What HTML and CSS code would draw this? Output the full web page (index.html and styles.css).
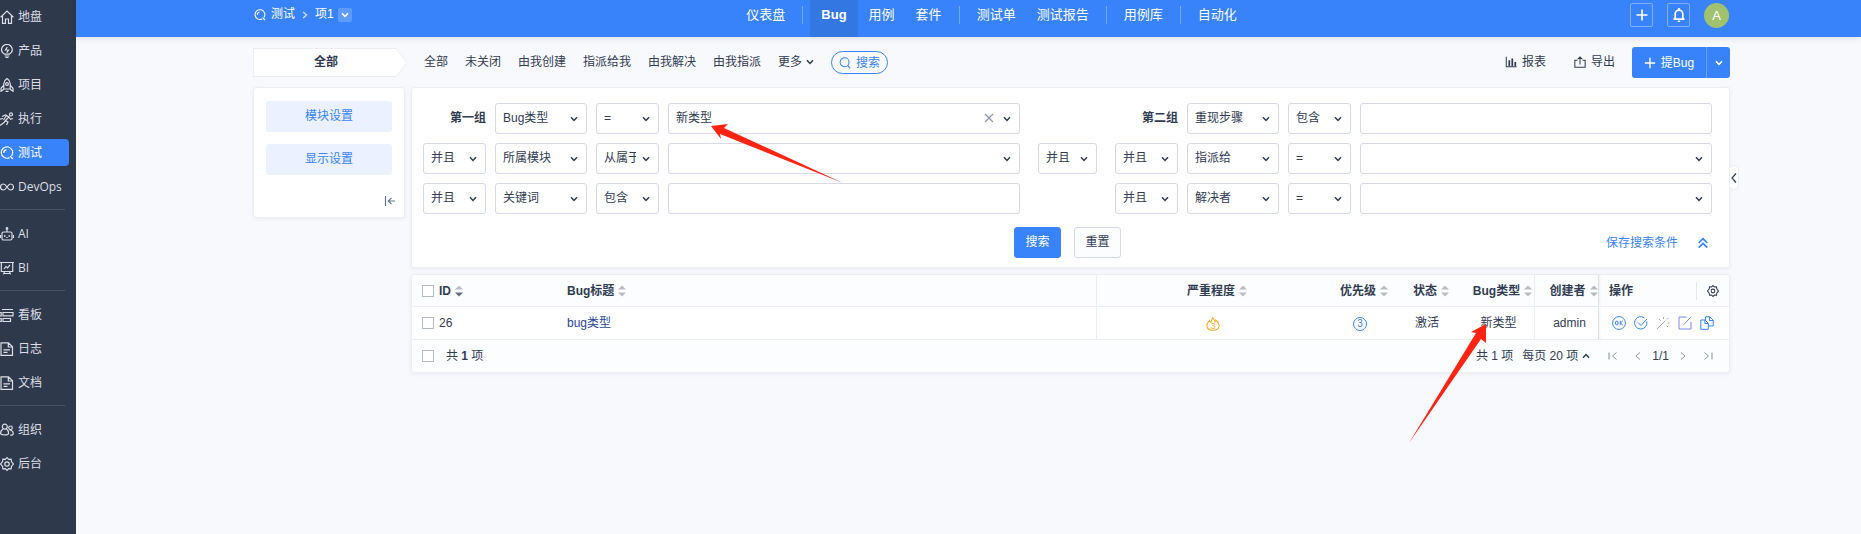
FILE: index.html
```html
<!DOCTYPE html>
<html lang="zh-CN">
<head>
<meta charset="utf-8">
<title>测试 - Bug</title>
<link rel="stylesheet" href="styles.css">
</head>
<body>
<svg class="defs" aria-hidden="true">
  <symbol id="caret" viewBox="0 0 8 8"><path d="M1 2.2l3 3.3 3-3.3"/></symbol>
  <symbol id="search" viewBox="0 0 14 14"><circle cx="6.5" cy="6.2" r="5.2"/><path d="M10.3 10l2.7 3"/></symbol>
  <symbol id="qa" viewBox="0 0 14 14"><path d="M9.5 11.6A5.7 5.7 0 1 1 11.6 9.8M10 10l3 3M3.8 7a3 3 0 0 1 2.6-3.2"/></symbol>
  <symbol id="doc" viewBox="0 0 14 14"><path d="M1 .8h7.5l4 4v8.6H1zM8.3.8v4.2h4.2M3.5 7.8h6.500M3.500 10.300h4"/></symbol>
  <symbol id="gear" viewBox="0 0 14 14"><path d="M7 .6l1.700 1.700 2.400-.2.3 2.400L13.400 7l-2 2.500-.3 2.400-2.400-.2L7 13.400l-1.700-1.700-2.400.2-.3-2.400L.6 7l2-2.500.3-2.400 2.400.2z"/><circle cx="7" cy="7" r="2.200"/></symbol>
  <symbol id="sort" viewBox="0 0 8 12"><path d="M4 0.500L8 4.500H0z"/><path class="down" d="M4 11.500L0 7.500h8z"/></symbol>
</svg>
<div class="app">
  <nav class="sidebar">
    <ul class="menu">
      <li><a href="#"><svg class="ic" viewBox="0 0 14 14"><path d="M.6 7.300L7 1l6.400 6.300M2.500 6v7.300h3V9h3v4.300h3V6"/></svg>地盘</a></li>
      <li><a href="#"><svg class="ic" viewBox="0 0 14 14"><path d="M4.500 10.200C2.500 9 1.500 7.500 1.500 5.800a5.400 5.400 0 0 1 10.800 0c0 1.700-1 3.200-3 4.400zM4.700 12h4.600M5.500 13.700h3M7.300 3L5.500 6h3L6.800 8.600"/></svg>产品</a></li>
      <li><a href="#"><svg class="ic" viewBox="0 0 14 14"><path d="M3.800 11V5.500C4 3.500 5.500 1.500 7 .6c1.500.9 3 2.900 3.200 4.900V11zM3.800 7.200L1 10.300v3l2.800-2M10.200 7.200l2.800 3.100v3l-2.800-2M5.500 13.300h3"/><circle cx="7" cy="6" r="1.400"/></svg>项目</a></li>
      <li><a href="#"><svg class="ic" viewBox="0 0 14 14"><circle cx="11" cy="2.400" r="1.500"/><path d="M2 4.500l3.500-1.500L9 5 5.500 8.500 8 10l-1.500 3M5.800 8.300L4 10.500 0 13.500M9 5l1.500 2.300 2.500-.8M0 7.200l3-.7M6.500 3.500L3.500 8"/></svg>执行</a></li>
      <li><a href="#" class="active"><svg class="ic"><use href="#qa"/></svg>测试</a></li>
      <li><a href="#"><svg class="ic" viewBox="0 0 14 14"><path d="M7 7C5.500 4.800 4.800 4 3.500 4a3 3 0 0 0 0 6C4.800 10 5.500 9.200 7 7s2.200-3 3.500-3a3 3 0 0 1 0 6C9.200 10 8.500 9.200 7 7z"/></svg>DevOps</a></li>
      <li class="rule"></li>
      <li><a href="#"><svg class="ic" viewBox="0 0 14 14"><rect x="2" y="5" width="10" height="8" rx="1.500"/><path d="M7 5V2.500M.6 8v3M13.400 8v3M4.800 8v2M9.200 8v2M6.300 10.500h1.400"/><circle cx="7" cy="1.500" r=".8"/></svg>AI</a></li>
      <li><a href="#"><svg class="ic" viewBox="0 0 14 14"><path d="M0 1.500h14M1.300 1.500v9h11.400v-9M4 8l2-2.500 1.500 1.300L10 4M4.500 10.500L3.500 13.400M9.500 10.500l1 2.900M4 12.500h6"/></svg>BI</a></li>
      <li class="rule"></li>
      <li><a href="#"><svg class="ic" viewBox="0 0 14 14"><path d="M2 1.500h11M3 4.500h10v3.300H3zM3 10.500h7.500v3H3zM0 4.500h1.200v3.300H0M0 10.500h1.200v3H0"/></svg>看板</a></li>
      <li><a href="#"><svg class="ic"><use href="#doc"/></svg>日志</a></li>
      <li><a href="#"><svg class="ic"><use href="#doc"/></svg>文档</a></li>
      <li class="rule"></li>
      <li><a href="#"><svg class="ic" viewBox="0 0 14 14"><circle cx="4.800" cy="3.600" r="2.500"/><circle cx="10.500" cy="4.800" r="1.800"/><path d="M3 6C1.200 7.200.6 8.800.6 10.500c0 1.700 8 2 8 0C8.600 8.800 8.200 7.200 6.500 6M9.500 7c2.400.2 3.700 2 3.700 3.800 0 1-1 1.500-3 1.400"/></svg>组织</a></li>
      <li><a href="#"><svg class="ic"><use href="#gear"/></svg>后台</a></li>
    </ul>
  </nav>
  <div class="page">
    <header class="header">
      <div class="crumbs">
        <svg class="ic small"><use href="#qa"/></svg>
        <a href="#">测试</a>
        <svg class="crumb-sep" viewBox="0 0 8 8"><path d="M2.200 1l3.300 3-3.300 3"/></svg>
        <a href="#">项1</a>
        <button class="crumb-caret" aria-label="切换"><svg class="caret"><use href="#caret"/></svg></button>
      </div>
      <nav class="tabs">
        <a href="#">仪表盘</a><i></i><a href="#" class="active">Bug</a><a href="#">用例</a><a href="#">套件</a><i></i><a href="#">测试单</a><a href="#">测试报告</a><i></i><a href="#">用例库</a><i></i><a href="#">自动化</a>
      </nav>
      <div class="user">
        <button class="square" aria-label="新建"><svg class="ic" viewBox="0 0 14 14"><path d="M7 1.500v11M1.500 7h11"/></svg></button>
        <button class="square" aria-label="通知"><svg class="ic" viewBox="0 0 14 14"><path d="M3.200 11V6a3.800 3.800 0 0 1 7.600 0v5M1.500 11.200h11M7 0v2M5.800 13.300h2.400"/></svg></button>
        <button class="avatar">A</button>
      </div>
    </header>
    <div class="content">
      <div class="toolbar">
        <div class="scope">
          <svg class="scope-tip" viewBox="0 0 12 30" preserveAspectRatio="none"><path d="M0 .5L11 15 0 29.500"/></svg>
          <span>全部</span>
        </div>
        <div class="filters">
          <a href="#">全部</a><a href="#">未关闭</a><a href="#">由我创建</a><a href="#">指派给我</a><a href="#">由我解决</a><a href="#">由我指派</a>
          <button class="more">更多<svg class="caret"><use href="#caret"/></svg></button>
          <button class="pill"><svg class="ic small"><use href="#search"/></svg>搜索</button>
        </div>
        <div class="actions">
          <button class="plain"><svg class="ic small" viewBox="0 0 14 14"><path d="M1.500 1v11.500H13.500"/><path class="bars" d="M5 5v7M8.500 3v9M12 7v5"/></svg>报表</button>
          <button class="plain"><svg class="ic small" viewBox="0 0 14 14"><path d="M4 5H1v8h12V5h-3M7 10V1.200M4.200 3.800L7 1l2.800 2.800"/></svg>导出</button>
          <div class="split"><button class="create"><svg class="ic plus" viewBox="0 0 14 14"><path d="M7 1v12M1 7h12"/></svg>提Bug</button><button class="create-more" aria-label="更多"><svg class="caret"><use href="#caret"/></svg></button></div>
        </div>
      </div>
      <div class="body">
        <aside class="modules card">
          <button>模块设置</button>
          <button>显示设置</button>
          <svg class="fold" viewBox="0 0 12 12"><path d="M1.500 1v10M11 6H4.500M7.500 2.800L4.300 6l3.200 3.200"/></svg>
        </aside>
        <main class="main">
          <form class="query card">
            <div class="groups">
              <div class="group">
                <strong>第一组</strong>
                <span class="sel"><select aria-label="字段"><option>Bug类型</option></select><svg class="caret"><use href="#caret"/></svg></span>
                <span class="sel"><select aria-label="条件"><option>=</option></select><svg class="caret"><use href="#caret"/></svg></span>
                <span class="sel"><select aria-label="值"><option>新类型</option></select><svg class="clear" viewBox="0 0 10 10"><path d="M1 1l8 8M9 1L1 9"/></svg><svg class="caret"><use href="#caret"/></svg></span>
                <span class="sel"><select aria-label="关系"><option>并且</option></select><svg class="caret"><use href="#caret"/></svg></span>
                <span class="sel"><select aria-label="字段"><option>所属模块</option></select><svg class="caret"><use href="#caret"/></svg></span>
                <span class="sel"><select aria-label="条件"><option>从属于</option></select><svg class="caret"><use href="#caret"/></svg></span>
                <span class="sel"><select aria-label="值"><option></option></select><svg class="caret"><use href="#caret"/></svg></span>
                <span class="sel"><select aria-label="关系"><option>并且</option></select><svg class="caret"><use href="#caret"/></svg></span>
                <span class="sel"><select aria-label="字段"><option>关键词</option></select><svg class="caret"><use href="#caret"/></svg></span>
                <span class="sel"><select aria-label="条件"><option>包含</option></select><svg class="caret"><use href="#caret"/></svg></span>
                <input type="text" aria-label="值">
              </div>
              <span class="sel joint"><select aria-label="组关系"><option>并且</option></select><svg class="caret"><use href="#caret"/></svg></span>
              <div class="group">
                <strong>第二组</strong>
                <span class="sel"><select aria-label="字段"><option>重现步骤</option></select><svg class="caret"><use href="#caret"/></svg></span>
                <span class="sel"><select aria-label="条件"><option>包含</option></select><svg class="caret"><use href="#caret"/></svg></span>
                <input type="text" aria-label="值">
                <span class="sel"><select aria-label="关系"><option>并且</option></select><svg class="caret"><use href="#caret"/></svg></span>
                <span class="sel"><select aria-label="字段"><option>指派给</option></select><svg class="caret"><use href="#caret"/></svg></span>
                <span class="sel"><select aria-label="条件"><option>=</option></select><svg class="caret"><use href="#caret"/></svg></span>
                <span class="sel"><select aria-label="值"><option></option></select><svg class="caret"><use href="#caret"/></svg></span>
                <span class="sel"><select aria-label="关系"><option>并且</option></select><svg class="caret"><use href="#caret"/></svg></span>
                <span class="sel"><select aria-label="字段"><option>解决者</option></select><svg class="caret"><use href="#caret"/></svg></span>
                <span class="sel"><select aria-label="条件"><option>=</option></select><svg class="caret"><use href="#caret"/></svg></span>
                <span class="sel"><select aria-label="值"><option></option></select><svg class="caret"><use href="#caret"/></svg></span>
              </div>
            </div>
            <div class="submit">
              <span></span>
              <div class="buttons"><button type="button" class="primary">搜索</button><button type="button">重置</button></div>
              <div class="save"><a href="#">保存搜索条件</a><svg class="ic small" viewBox="0 0 14 14"><path d="M2 7l5-5 5 5M2 12.500l5-5 5 5"/></svg></div>
            </div>
            <button type="button" class="handle" aria-label="展开"><svg viewBox="0 0 6 12"><path d="M5 1.500L1 6l4 4.500"/></svg></button>
          </form>
          <section class="list card">
            <table>
              <colgroup><col class="c-id"><col><col class="c-sev"><col class="c-pri"><col class="c-st"><col class="c-st"><col class="c-by"><col class="c-act"></colgroup>
              <thead><tr>
                <th class="id"><label class="check"><input type="checkbox">ID<svg class="sort desc"><use href="#sort"/></svg></label></th>
                <th class="left line">Bug标题<svg class="sort"><use href="#sort"/></svg></th>
                <th>严重程度<svg class="sort"><use href="#sort"/></svg></th>
                <th>优先级<svg class="sort"><use href="#sort"/></svg></th>
                <th>状态<svg class="sort"><use href="#sort"/></svg></th>
                <th class="line">Bug类型<svg class="sort"><use href="#sort"/></svg></th>
                <th class="line edge">创建者<svg class="sort"><use href="#sort"/></svg></th>
                <th class="ops"><div><span>操作</span><i></i><svg class="ic small"><use href="#gear"/></svg></div></th>
              </tr></thead>
              <tbody><tr>
                <td class="id"><label class="check"><input type="checkbox">26</label></td>
                <td class="left line"><a href="#">bug类型</a></td>
                <td><span class="fire"><svg viewBox="0 0 16 16"><path d="M4.200 4.200C4.300 5.200 4.800 6 5.500 6 6.500 5.500 6.200 2.500 7.800.8c.4 1.700 1.800 2.200 2.300 4.400.7-.2 1.100-.7 1.200-1.500 2.200 1.600 3.700 3.400 3.700 6 0 3.300-3 5.400-7 5.400s-7-2.100-7-5.400c0-2.600 1.300-3.900 3.200-5.500z"/></svg><b>3</b></span></td>
                <td><span class="pri">3</span></td>
                <td>激活</td>
                <td class="line">新类型</td>
                <td class="line edge">admin</td>
                <td class="row-ops"><div>
                  <button aria-label="确认"><svg class="ic" viewBox="0 0 14 14"><circle cx="7" cy="7" r="6.400"/><ellipse cx="4.800" cy="7" rx="1.400" ry="2"/><path d="M8.200 4.800v4.400M10.800 4.800L8.500 7l2.300 2.200"/></svg></button>
                  <button aria-label="解决"><svg class="ic" viewBox="0 0 14 14"><path d="M12.800 5.500A6.200 6.200 0 1 1 10.500 1.900M4 6.500L7 9.500l6-6.500"/></svg></button>
                  <button class="off" aria-label="关闭"><svg class="ic" viewBox="0 0 14 14"><path d="M1 13l7-7M7.500 1v2M12.500 2L11 3.500M3 3l1.500 1.500M11.500 7h2M10.500 9.500l1.500 1.500M9.200 4.800l-2 2"/></svg></button>
                  <button class="edit" aria-label="编辑"><svg class="ic" viewBox="0 0 14 14"><path d="M8.500 1H1v12h12V6M6 8.500L12.800 1"/></svg></button>
                  <button aria-label="复制"><svg class="ic" viewBox="0 0 14 14"><path d="M5.500 4V.8h4.200l3.500 3.500V10H8.500M9.500 1v3.500H13M.8 4h4.200L8.300 7.300v6H.8zM4.800 4.200v3.300H8"/></svg></button>
                </div></td>
              </tr></tbody>
            </table>
            <footer class="footer">
              <label class="check wide"><input type="checkbox"><span>共 <b>1</b> 项</span></label>
              <div class="pager">
                <span>共 1 项</span>
                <button class="size">每页 20 项<svg class="caret flip"><use href="#caret"/></svg></button>
                <button class="pg" aria-label="首页"><svg viewBox="0 0 10 8"><path d="M1 .5v7M8.500.5L4.500 4l4 3.500"/></svg></button>
                <button class="pg" aria-label="上一页"><svg viewBox="0 0 10 8"><path d="M7 .5L3 4l4 3.500"/></svg></button>
                <span class="at">1/1</span>
                <button class="pg" aria-label="下一页"><svg viewBox="0 0 10 8"><path d="M3 .5L7 4 3 7.500"/></svg></button>
                <button class="pg" aria-label="末页"><svg viewBox="0 0 10 8"><path d="M1.500.5l4 3.500-4 3.500M9 .5v7"/></svg></button>
              </div>
            </footer>
          </section>
        </main>
      </div>
    </div>
  </div>
</div>
<svg class="arrow arrow-value" viewBox="0 0 134 62" aria-hidden="true"><path d="M1 4l17-2-4 4 119 55L10 12l1 5z"/></svg>
<svg class="arrow arrow-column" viewBox="0 0 82 124" aria-hidden="true"><path d="M78 2L63 10l5 1L1 121 73 17l5 4z"/></svg>
</body>
</html>
```
FILE: styles.css
```css
* { box-sizing: border-box; }
body {
  margin: 0;
  background: #f8f9fc;
  color: #313c52;
  font: 12px/18px "Liberation Sans", "Noto Sans CJK SC", sans-serif;
}
a { color: inherit; text-decoration: none; }
button, input, select { font: inherit; color: inherit; margin: 0; }
button { padding: 0; border: 0; background: none; display: flex; align-items: center; justify-content: center; }
svg { fill: none; stroke: currentColor; stroke-width: 1.2; flex: none; }
.defs { position: absolute; width: 0; height: 0; }
.ic { width: 14px; height: 14px; }
.ic.small { width: 12px; height: 12px; }
.caret { width: 8px; height: 8px; stroke-width: 1.5; }
.flip { transform: rotate(180deg); }

.app { display: flex; min-height: 100vh; }
.sidebar { flex: none; width: 76px; background: #2f394c; color: #dcdfe5; font-family: "Open Sans", "Noto Sans CJK SC", sans-serif; }
.menu { list-style: none; margin: 0; padding: 3px 7px 0 0; display: grid; gap: 7px; }
.menu a { display: flex; align-items: center; gap: 4px; height: 27px; border-radius: 0 4px 4px 0; }
.menu .active { background: #3883fa; color: #fff; }
.menu .rule { height: 1px; margin: 2px 4px 3px 0; background: #4a5366; }

.page { flex: 1; min-width: 0; }
.header {
  display: grid; grid-template-columns: 1fr auto 1fr;
  height: 37px; padding: 0 131px 0 177px;
  background: #3883fa; color: #fff; font-size: 13px; line-height: 29px;
  box-shadow: 0 1px 6px rgba(0, 0, 0, .12);
}
.crumbs { display: flex; align-items: center; gap: 4px; height: 29px; font-size: 12px; padding-left: 1px; }
.crumbs .small { margin-right: 1px; }
.crumb-sep { width: 8px; height: 8px; margin: 0 2px; opacity: .7; stroke-width: 1.5; }
.crumb-caret { width: 14px; height: 14px; border-radius: 2px; background: rgba(255, 255, 255, .2); color: #fff; }
.tabs { display: flex; gap: 1px; }
.tabs a { padding: 0 10px; }
.tabs .active { padding: 0 11px; background: #3377e2; font-weight: bold; }
.tabs i { width: 1px; height: 18px; margin: 6px 6px 0; background: rgba(255, 255, 255, .3); }
.user { display: flex; justify-content: flex-end; gap: 14px; padding: 3px 1px 0 0; }
.square { width: 23px; height: 24px; border: 1px solid rgba(255, 255, 255, .35); border-radius: 2px; color: #fff; }
.square svg { stroke-width: 1.7; }
.avatar { width: 25px; height: 25px; border-radius: 50%; background: #a0c26e; color: #fff; font-size: 13px; }

.content { padding: 10px 131px 0 177px; }
.toolbar { display: flex; align-items: center; height: 31px; }
.scope { display: flex; width: 155px; height: 29px; font-weight: bold; }
.scope span { order: -1; flex: 1; padding-left: 2px; line-height: 27px; text-align: center; background: #fff; border: 1px solid #eceef3; border-right: 0; }
.scope-tip { width: 12px; height: 29px; fill: #fff; stroke: #eceef3; stroke-width: 1; }
.filters { display: flex; align-items: center; gap: 17px; margin-left: 16px; }
.filters a, .more, .plain { padding-bottom: 2px; }
.more { gap: 4px; }
.pill { gap: 5px; width: 57px; height: 23px; border: 1px solid #3883fa; border-radius: 12px; color: #3883fa; }
.actions { display: flex; align-items: center; gap: 28px; margin-left: auto; }
.plain { gap: 5px; }
.bars { stroke-width: 2; }
.split { display: flex; height: 31px; margin-left: -11px; border-radius: 3px; overflow: hidden; }
.split button { background: #3883fa; color: #fff; }
.create { width: 74px; gap: 5px; }
.plus { width: 12px; height: 12px; stroke-width: 1.6; }
.split .create-more { width: 24px; border-left: 1px solid #6aa3fb; }

.card { background: #fff; border: 1px solid #eceef3; border-radius: 3px; box-shadow: 0 1px 4px rgba(30, 50, 90, .07); }
.body { display: flex; align-items: flex-start; gap: 6px; margin-top: 9px; }
.modules { flex: none; width: 152px; height: 131px; padding: 13px 12px 12px; display: flex; flex-direction: column; gap: 12px; }
.modules button { height: 31px; padding-bottom: 1px; border-radius: 3px; background: #ebf1fe; color: #3883fa; }
.fold { width: 12px; height: 12px; margin: auto -4px -2px auto; color: #64758b; }
.main { flex: 1; min-width: 0; display: grid; gap: 6px; }
.query { position: relative; padding: 15px 17px 9px 11px; }
.groups { display: flex; gap: 18px; }
.group { flex: 1; min-width: 0; display: grid; grid-template-columns: 63px 92px 63px 1fr; grid-auto-rows: 31px; gap: 9px; }
.group strong { line-height: 31px; text-align: right; }
.sel { position: relative; display: flex; }
.sel select, .group input {
  appearance: none; width: 100%; height: 31px; padding: 0 7px 2px;
  border: 1px solid #d5d9e8; border-radius: 3px; background: #fff; outline: 0;
}
.sel select { padding-right: 22px; }
.sel .caret { position: absolute; right: 9px; top: 12px; pointer-events: none; }
.clear { position: absolute; right: 26px; top: 10px; width: 10px; height: 10px; color: #8d94a3; }
.joint { flex: none; width: 59px; height: 31px; margin-top: 40px; }
.submit { display: grid; grid-template-columns: 1fr auto 1fr; align-items: center; margin-top: 13px; }
.buttons { display: flex; gap: 13px; }
.buttons button { width: 47px; height: 31px; padding-bottom: 1px; border: 1px solid #d5d9e8; border-radius: 3px; background: #fcfdfe; }
.buttons .primary { background: #3883fa; border-color: #3883fa; color: #fff; }
.save { display: flex; justify-content: flex-end; align-items: center; gap: 19px; padding-right: 3px; color: #3883fa; }
.save svg { stroke-width: 2; }
.handle { position: absolute; right: -10px; top: 77px; width: 10px; height: 25px; background: #fff; border: 1px solid #eceef3; border-radius: 5px; }
.handle svg { width: 6px; height: 12px; }

.list { background: #fcfdfe; }
table { width: 100%; table-layout: fixed; border-collapse: separate; border-spacing: 0; }
.c-id { width: 147px; } .c-sev { width: 232px; } .c-pri { width: 62px; } .c-st { width: 72px; } .c-by { width: 64px; } .c-act { width: 130px; }
th, td { height: 33px; padding: 0; border-bottom: 1px solid #eceef3; text-align: center; white-space: nowrap; }
th { height: 32px; padding-left: 8px; }
tbody { background: #fff; }
.left, .id { text-align: left; padding-left: 8px; }
.id { padding-left: 10px; }
.line { border-right: 1px solid #eceef3; }
.edge { padding-left: 6px; border-right-color: #dfe2e8; box-shadow: 1px 0 2px rgba(0, 0, 0, .06); }
th.edge { padding-left: 14px; }
.left a { color: #2a469c; }
.sort { width: 8px; height: 12px; margin-left: 4px; vertical-align: -2px; stroke: none; fill: #b9bcc5; }
.down { fill: var(--down, #b9bcc5); }
.desc { --down: #646b7c; margin-left: 0; }
.check { display: flex; align-items: center; gap: 4px; }
.check input { appearance: none; width: 12px; height: 12px; margin: 0 1px 0 0; border: 1px solid #b4b9c8; background: #fff; }
.wide { gap: 11px; }
.fire, .pri { display: inline-grid; place-items: center; width: 14px; height: 14px; font-size: 10px; line-height: 12px; vertical-align: middle; }
.fire { grid-template: 14px / 14px; color: #f9ab22; font-size: 9px; }
.fire svg { grid-area: 1 / 1; width: 14px; height: 14px; }
.fire b { grid-area: 1 / 1; padding-top: 4px; font-weight: normal; }
.pri { border: 1px solid #3883fa; border-radius: 50%; color: #3883fa; }
.ops { padding: 0; }
.ops div { display: flex; align-items: center; gap: 10px; padding: 0 10px; }
.ops i { width: 1px; height: 18px; margin-left: auto; background: #e4e7ee; }
.row-ops div { display: flex; gap: 8px; padding-left: 13px; }
.row-ops button { color: #3883fa; }
.row-ops svg { stroke-width: 1; }
.row-ops .off { color: #a8a8a8; }
.row-ops .edit { color: #7d86f5; }
.footer { display: flex; justify-content: space-between; height: 32px; padding: 0 16px 0 10px; }
.pager { display: flex; align-items: center; }
.size { gap: 4px; margin: 0 18px 0 9px; }
.pg { color: #888e9b; }
.pg svg { width: 10px; height: 8px; stroke-width: 1; }
.pg + .pg { margin-left: 15px; }
.at { margin: 0 9px; }

.arrow { position: absolute; fill: #ff2312; stroke: none; pointer-events: none; }
.arrow-value { left: 710px; top: 122px; width: 134px; height: 62px; }
.arrow-column { left: 1408px; top: 322px; width: 82px; height: 124px; }
```
